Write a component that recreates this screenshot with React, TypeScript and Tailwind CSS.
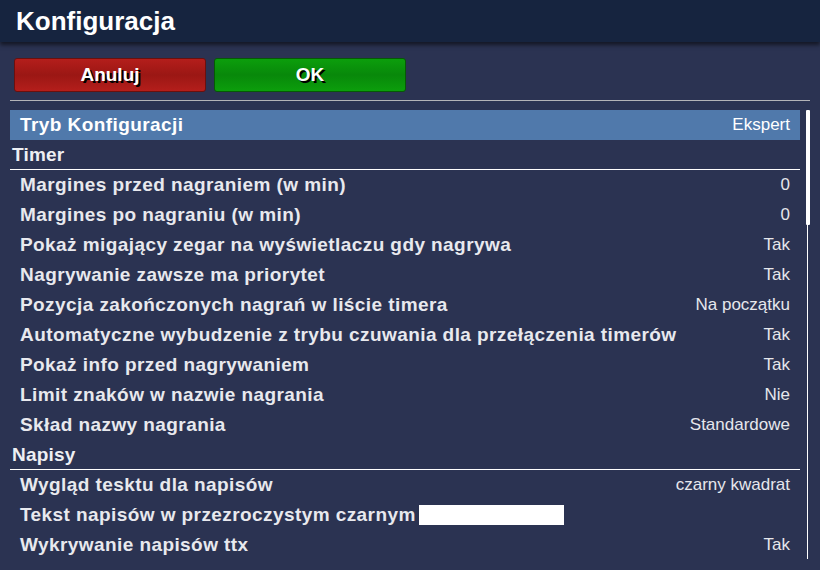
const timer = [
  { label: "Margines przed nagraniem (w min)", value: "0" },
  { label: "Margines po nagraniu (w min)", value: "0" },
  { label: "Pokaż migający zegar na wyświetlaczu gdy nagrywa", value: "Tak" },
  { label: "Nagrywanie zawsze ma priorytet", value: "Tak" },
  { label: "Pozycja zakończonych nagrań w liście timera", value: "Na początku" },
  { label: "Automatyczne wybudzenie z trybu czuwania dla przełączenia timerów", value: "Tak" },
  { label: "Pokaż info przed nagrywaniem", value: "Tak" },
  { label: "Limit znaków w nazwie nagrania", value: "Nie" },
  { label: "Skład nazwy nagrania", value: "Standardowe" },
];

const napisy = [
  { label: "Wygląd tesktu dla napisów", value: "czarny kwadrat" },
  { label: "Tekst napisów w przezroczystym czarnym", value: "", box: true },
  { label: "Wykrywanie napisów ttx", value: "Tak" },
];

type Item = { label: string; value: string; box?: boolean };

function Row({ item }: { item: Item }) {
  return (
    <div className="flex h-[30px] items-center justify-between px-[10px] leading-[30px]">
      <div className="flex items-center">
        <span className="text-[19px] font-bold tracking-[0.42px] text-[#e8e9ee]">{item.label}</span>
        {item.box && <span className="ml-[3px] h-[20px] w-[145px] bg-white" />}
      </div>
      <span className="text-[17px] text-[#e6e7ec]">{item.value}</span>
    </div>
  );
}

function Section({ title }: { title: string }) {
  return (
    <div className="flex h-[30px] items-center border-b border-white pl-[2px] leading-[29px]">
      <span className="text-[19px] font-bold tracking-[0.2px] text-[#eeeff3]">{title}</span>
    </div>
  );
}

export default function App() {
  return (
    <div className="h-[570px] w-[820px] overflow-hidden bg-[#2b3352] font-['Liberation_Sans',Arial,sans-serif]">
      <header className="relative z-10 flex h-[42px] items-center bg-[#16243f] pl-[16px] shadow-[0_3px_4px_rgba(0,0,0,0.55)]">
        <h1 className="text-[26px] font-bold leading-none text-white">Konfiguracja</h1>
      </header>

      <div className="flex gap-[8px] px-[14px] pt-[16px]">
        <button className="h-[34px] w-[192px] rounded-[3px] border border-[#6a100e] bg-linear-to-b from-[#b41e1b] via-[#9b1714] to-[#b41e1b] text-[19px] font-bold text-white [text-shadow:2px_2px_0_#000]">
          Anuluj
        </button>
        <button className="h-[34px] w-[192px] rounded-[3px] border border-[#055a05] bg-linear-to-b from-[#0c9e0c] via-[#08880a] to-[#0c9e0c] text-[19px] font-bold text-white [text-shadow:2px_2px_0_#000]">
          OK
        </button>
      </div>

      <div className="mx-[10px] mt-[8px] h-px w-[800px] bg-[#b4b4b8]" />

      <div className="mt-[9px] flex pl-[10px]">
        <div className="w-[790px]">
          <div className="flex h-[30px] items-center justify-between bg-[#5079ab] px-[10px] leading-[30px]">
            <span className="text-[19px] font-bold tracking-[0.42px] text-white">Tryb Konfiguracji</span>
            <span className="text-[17px] text-white">Ekspert</span>
          </div>
          <Section title="Timer" />
          {timer.map((it) => (
            <Row key={it.label} item={it} />
          ))}
          <Section title="Napisy" />
          {napisy.map((it) => (
            <Row key={it.label} item={it} />
          ))}
        </div>
        <div className="ml-[6px] flex w-[4px] flex-col">
          <div className="h-[115px] w-[4px] rounded-[1px] bg-white" />
          <div className="ml-[1px] h-[334px] w-px bg-white" />
        </div>
      </div>
    </div>
  );
}
